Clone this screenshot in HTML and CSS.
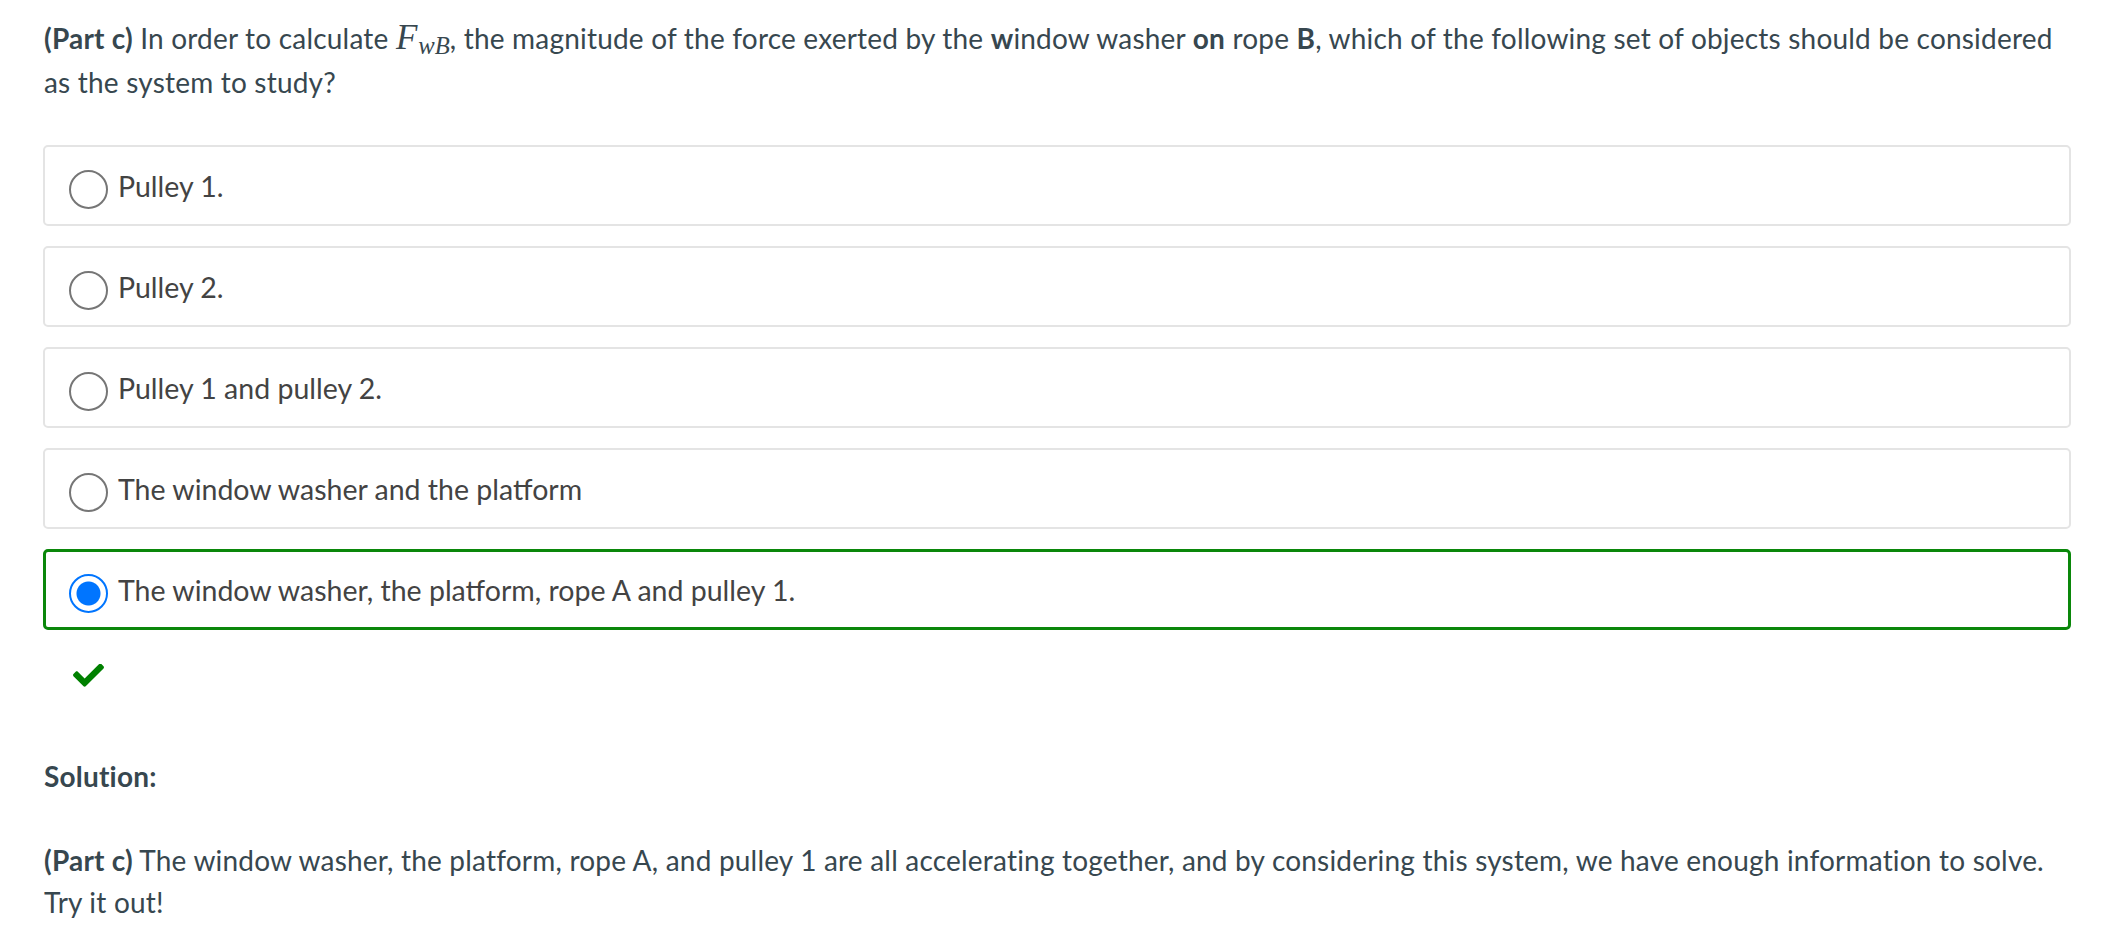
FILE: index.html
```html
<!DOCTYPE html>
<html lang="en">
<head>
<meta charset="utf-8">
<title>Part c</title>
<link rel="stylesheet" href="styles.css">
</head>
<body>
<main class="page">
  <p class="text question"><strong>(Part c)</strong> In order to calculate <span class="math"><span class="mi">F</span><span class="sub">wB</span></span>, the magnitude of the force exerted by the <strong>w</strong>indow washer <strong>on</strong> rope <strong>B</strong>, which of the following set of objects should be considered as the system to study?</p>

  <ul class="options">
    <li class="option"><span class="radio"></span><span class="label">Pulley 1.</span></li>
    <li class="option"><span class="radio"></span><span class="label">Pulley 2.</span></li>
    <li class="option"><span class="radio"></span><span class="label">Pulley 1 and pulley 2.</span></li>
    <li class="option"><span class="radio"></span><span class="label">The window washer and the platform</span></li>
    <li class="option option-correct"><span class="radio radio-checked"></span><span class="label">The window washer, the platform, rope A and pulley 1.</span></li>
  </ul>

  <div class="feedback">
    <svg class="check" viewBox="0 0 512 380" width="31" height="23" aria-hidden="true"><path fill="#008000" d="M173.898 367.404l-166.4-166.4c-9.997-9.997-9.997-26.206 0-36.204l36.203-36.204c9.997-9.998 26.207-9.998 36.204 0L192 240.69 432.095 0.596c9.997-9.997 26.207-9.997 36.204 0l36.203 36.204c9.997 9.997 9.997 26.206 0 36.204l-294.4 294.401c-9.998 9.997-26.207 9.997-36.204-.001z"/></svg>
  </div>

  <p class="text solution-title"><strong>Solution:</strong></p>
  <p class="text solution"><strong>(Part c)</strong> The window washer, the platform, rope A, and pulley 1 are all accelerating together, and by considering this system, we have enough information to solve. Try it out!</p>
</main>
</body>
</html>
```
FILE: styles.css
```css
html, body {
  margin: 0;
  padding: 0;
  background: #ffffff;
}

.page {
  padding: 17px 35px 0 43px;
  font-family: "Lato", "Liberation Sans", sans-serif;
  font-size: 28px;
  line-height: 42px;
  color: #37474f;
}

.text {
  margin: 0;
  padding-left: 1px;
  padding-right: 4px;
  letter-spacing: 0.2px;
}

.text strong {
  font-weight: 700;
}

.math {
  font-family: "Liberation Serif", "DejaVu Serif", serif;
  font-style: italic;
  white-space: nowrap;
  letter-spacing: 0;
}

.mi {
  font-size: 1.25em;
  margin-right: 1px;
}

.sub {
  font-size: 0.88em;
  vertical-align: -0.22em;
  line-height: 1;
}

.question {
  margin-bottom: 42px;
}

.options {
  list-style: none;
  margin: 0;
  padding: 0;
  display: flex;
  flex-direction: column;
  gap: 20px;
}

.option {
  box-sizing: border-box;
  height: 81px;
  border: 2px solid #e4e4e4;
  border-radius: 5px;
  display: flex;
  align-items: center;
  padding-left: 24px;
  font-size: 28.5px;
  line-height: 36px;
  color: #434343;
}

.option-correct {
  border: 3px solid #0a870a;
  padding-left: 23px;
}

.radio {
  box-sizing: border-box;
  flex: none;
  width: 39px;
  height: 39px;
  border: 2px solid #767676;
  border-radius: 50%;
  margin-top: 8px;
  margin-right: 10px;
  background: #fff;
}

.radio-checked {
  border-color: #0075ff;
  background: radial-gradient(circle, #0075ff 0 11.5px, #ffffff 12.5px);
}

.label {
  white-space: nowrap;
}

.feedback {
  display: flex;
  padding-left: 30px;
  padding-top: 34px;
  height: 23px;
  margin-bottom: 68px;
}

.check {
  display: block;
}

.solution-title {
  margin-bottom: 42px;
}
```
